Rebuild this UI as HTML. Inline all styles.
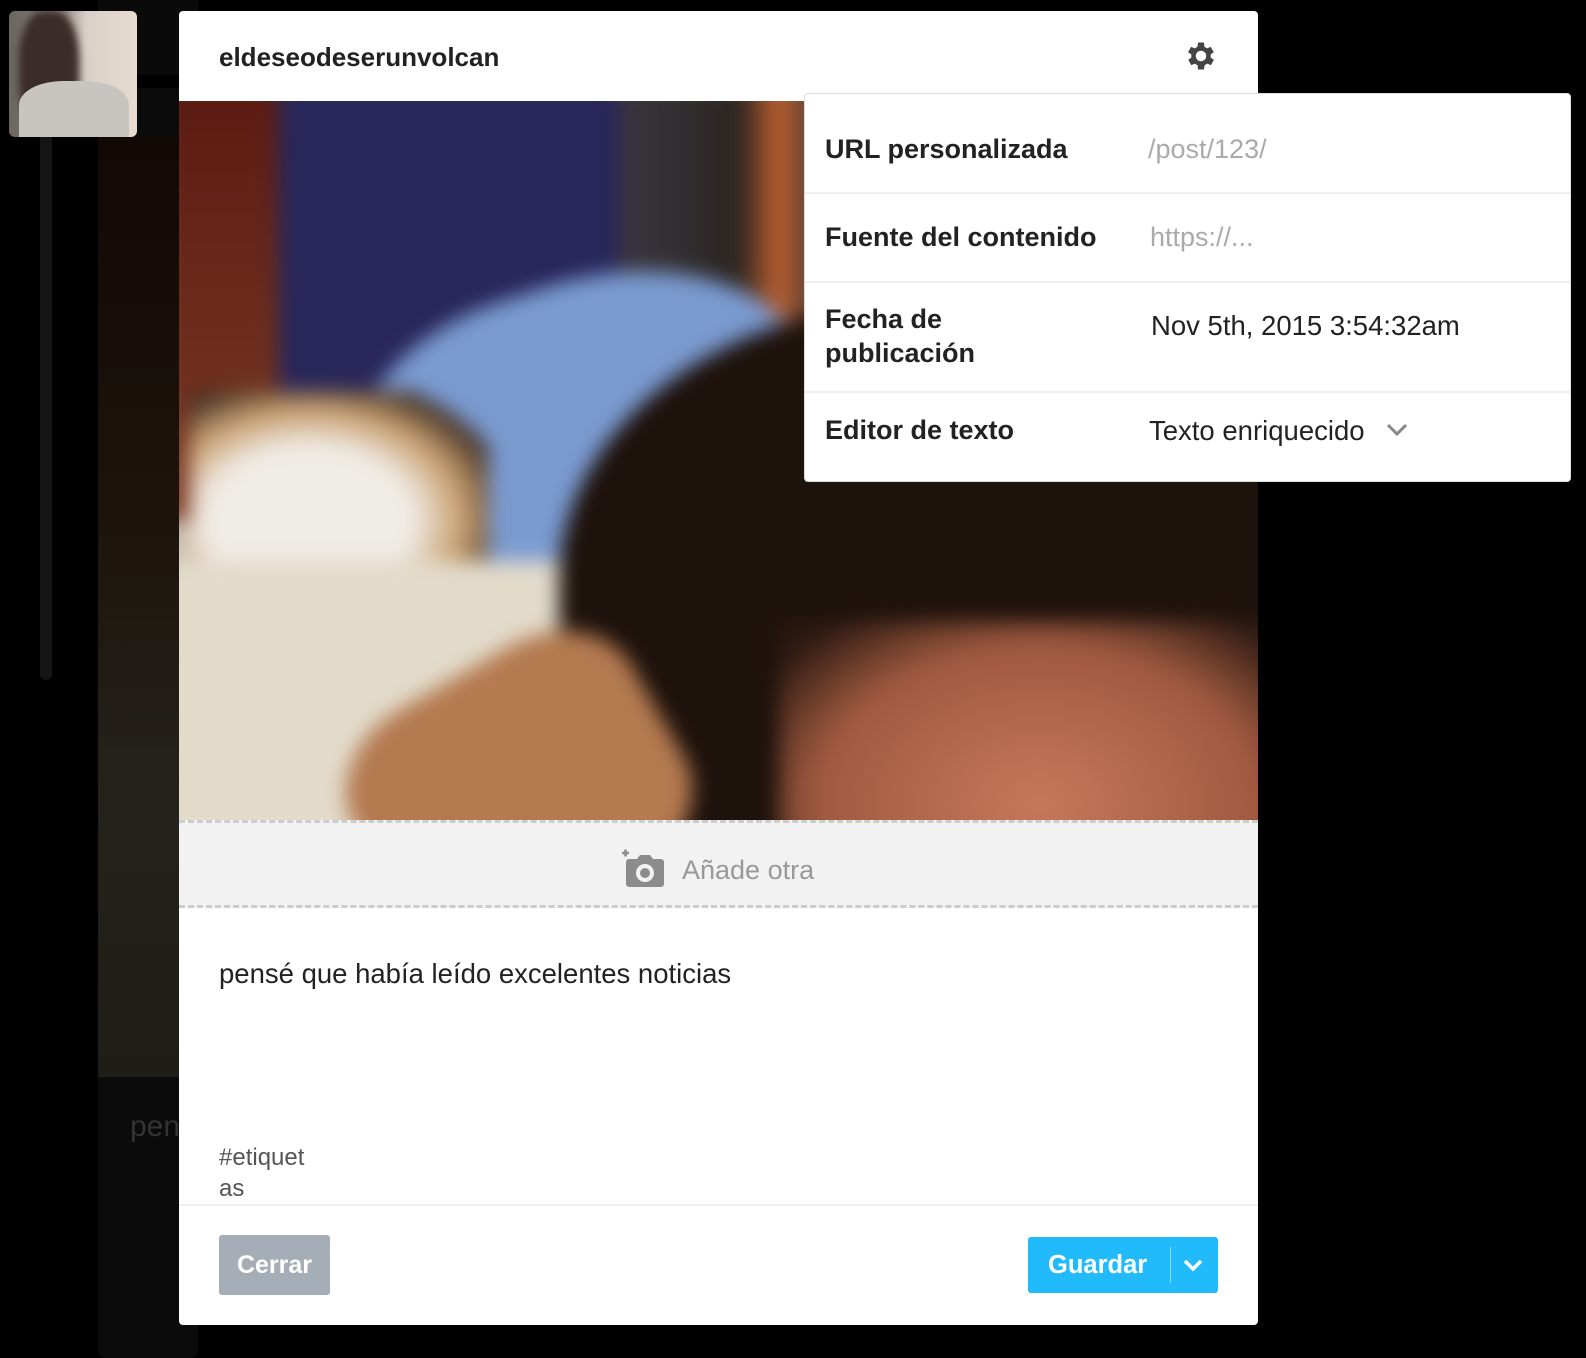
<!DOCTYPE html>
<html><head><meta charset="utf-8"><style>
*{margin:0;padding:0;box-sizing:border-box}
body{width:1586px;height:1354px;background:#000;position:relative;overflow:hidden;font-family:"Liberation Sans",sans-serif}
.abs{position:absolute}
</style></head><body>
<div class="abs" style="left:40px;top:50px;width:12px;height:630px;background:#151515;border-radius:6px"></div>
<div class="abs" style="left:98px;top:0;width:100px;height:75px;background:#0a0a0a;border-radius:0 0 8px 8px"></div>
<div class="abs" style="left:98px;top:88px;width:100px;height:1270px;background:#0b0b0b;border-radius:8px"></div>
<div class="abs" style="left:98px;top:137px;width:100px;height:940px;background:linear-gradient(#120806,#1c140c 40%,#25221c 70%,#1f1d17)"></div>
<div class="abs" style="left:130px;top:1110px;color:#333;font-size:30px">pen</div>
<div class="abs" style="left:9px;top:11px;width:128px;height:126px;border-radius:6px;overflow:hidden;background:linear-gradient(90deg,#6a6660 0%,#8c827a 40%,#d8d0c8 60%,#e8dcd0 100%)">
  <div class="abs" style="left:10px;top:0;width:60px;height:120px;background:#3a2c28;border-radius:40%;filter:blur(4px)"></div>
  <div class="abs" style="left:10px;top:70px;width:110px;height:60px;background:#c8c4c0;border-radius:40% 40% 0 0"></div>
</div>
<div class="abs" style="left:179px;top:11px;width:1079px;height:1314px;background:#fff;border-radius:4px;overflow:hidden">
  <div class="abs" style="left:40px;top:31px;font-size:26px;font-weight:bold;color:#222">eldeseodeserunvolcan</div>
  <svg class="abs" style="left:1004px;top:27px" width="36" height="36" viewBox="0 0 24 24"><path fill="#444" d="M19.4 13a7.5 7.5 0 0 0 0-2l2.1-1.6-2-3.5-2.5 1a7 7 0 0 0-1.7-1L15 3h-4l-.4 2.9a7 7 0 0 0-1.7 1l-2.5-1-2 3.5L6.6 11a7.5 7.5 0 0 0 0 2l-2.1 1.6 2 3.5 2.5-1a7 7 0 0 0 1.7 1L11 21h4l.4-2.9a7 7 0 0 0 1.7-1l2.5 1 2-3.5zM13 15.5a3.5 3.5 0 1 1 0-7 3.5 3.5 0 0 1 0 7z" transform="translate(-1 0)"/></svg>
  <div class="abs" style="left:0;top:90px;width:1079px;height:719px;overflow:hidden;background:#c8bfae">
   <div class="abs" style="left:0;top:0;width:1079px;height:719px;filter:blur(10px)">
    <div class="abs" style="left:-20px;top:-20px;width:140px;height:440px;background:linear-gradient(#5a1a12,#7a3a25)"></div>
    <div class="abs" style="left:100px;top:-20px;width:400px;height:350px;background:#28265a"></div>
    <div class="abs" style="left:440px;top:-20px;width:200px;height:280px;background:linear-gradient(90deg,#3a3640,#2a2520 60%,#c06030 80%,#3a3430)"></div>
    <div class="abs" style="left:180px;top:180px;width:460px;height:300px;background:#7a9ad0;border-radius:40% 50% 30% 20%;transform:rotate(-18deg)"></div>
    <div class="abs" style="left:10px;top:290px;width:300px;height:260px;background:radial-gradient(ellipse at 40% 50%,#f0ece6 40%,#c9a070 60%,#3a2a20 80%,transparent 82%)"></div>
    <div class="abs" style="left:-20px;top:460px;width:460px;height:280px;background:#e2dbca"></div>
    <div class="abs" style="left:380px;top:200px;width:740px;height:560px;background:#1e120c;border-radius:50% 20% 0 0"></div>
    <div class="abs" style="left:180px;top:560px;width:320px;height:260px;background:#b47a50;transform:rotate(-30deg);border-radius:30%"></div>
    <div class="abs" style="left:600px;top:520px;width:520px;height:260px;background:radial-gradient(ellipse at 50% 70%,#c8785a,#a05a40 60%,#2a1810 90%)"></div>
   </div>
  </div>
  <div class="abs" style="left:0;top:809px;width:1079px;height:88px;background:#f2f2f2;border-top:3px dashed #ccc;border-bottom:3px dashed #ccc"></div>
  <svg class="abs" style="left:442px;top:838px" width="44" height="40" viewBox="0 0 44 40"><path d="M1 4h7M4.5 0.5v7" stroke="#8c8c8c" stroke-width="2.5"/><path fill="#8c8c8c" d="M8 10h8l3-4h10l3 4h8a3 3 0 0 1 3 3v22a3 3 0 0 1-3 3H8a3 3 0 0 1-3-3V13a3 3 0 0 1 3-3zm16 5a9 9 0 1 0 0 18 9 9 0 0 0 0-18zm0 4a5 5 0 1 1 0 10 5 5 0 0 1 0-10z"/></svg>
  <div class="abs" style="left:503px;top:844px;font-size:27px;color:#999">Añade otra</div>
  <div class="abs" style="left:40px;top:947px;font-size:27.5px;color:#222">pensé que había leído excelentes noticias</div>
  <div class="abs" style="left:40px;top:1131px;font-size:24px;color:#555;line-height:31px">#etiquet<br>as</div>
  <div class="abs" style="left:0;top:1193px;width:1079px;height:2px;background:#f0f0f0"></div>
  <div class="abs" style="left:40px;top:1224px;width:111px;height:60px;background:#a5adb6;border-radius:3px;color:#fff;font-size:25px;font-weight:bold;line-height:60px;text-align:center">Cerrar</div>
  <div class="abs" style="left:849px;top:1226px;width:190px;height:56px;background:#21bbfc;border-radius:3px;color:#fff;font-size:25.5px;font-weight:bold;line-height:56px">
    <span style="position:absolute;left:20px">Guardar</span>
    <span style="position:absolute;left:142px;top:10px;width:1px;height:36px;background:#8fdcfd"></span>
    <svg style="position:absolute;left:154px;top:20px" width="22" height="16" viewBox="0 0 22 16"><path d="M3 4l8 8 8-8" stroke="#fff" stroke-width="3.5" fill="none"/></svg>
  </div>
</div>
<div class="abs" style="left:804px;top:93px;width:767px;height:389px;background:#fff;border-radius:4px;border:1px solid #ddd;font-size:27px;color:#222">
  <div class="abs" style="left:20px;top:40px;font-weight:bold">URL personalizada</div>
  <div class="abs" style="left:343px;top:40px;color:#aaa">/post/123/</div>
  <div class="abs" style="left:0;top:98px;width:100%;height:2px;background:#eee"></div>
  <div class="abs" style="left:20px;top:128px;font-weight:bold">Fuente del contenido</div>
  <div class="abs" style="left:345px;top:128px;color:#aaa">https://...</div>
  <div class="abs" style="left:0;top:187px;width:100%;height:2px;background:#eee"></div>
  <div class="abs" style="left:20px;top:208px;font-weight:bold;line-height:34px">Fecha de<br>publicación</div>
  <div class="abs" style="left:346px;top:216px;font-size:27.5px">Nov 5th, 2015 3:54:32am</div>
  <div class="abs" style="left:0;top:297px;width:100%;height:2px;background:#eee"></div>
  <div class="abs" style="left:20px;top:321px;font-weight:bold">Editor de texto</div>
  <div class="abs" style="left:344px;top:321px;font-size:27.5px">Texto enriquecido</div>
  <svg class="abs" style="left:580px;top:326px" width="24" height="18" viewBox="0 0 24 18"><path d="M3 5l9 9 9-9" stroke="#888" stroke-width="3" fill="none"/></svg>
</div>
</body></html>
